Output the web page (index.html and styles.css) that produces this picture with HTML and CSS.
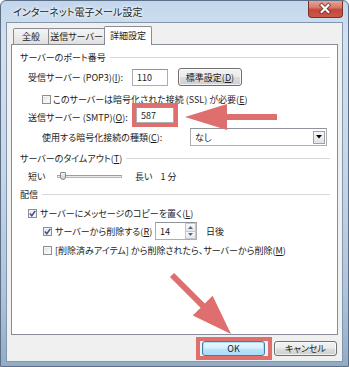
FILE: index.html
```html
<!DOCTYPE html>
<html lang="ja">
<head>
<meta charset="utf-8">
<link rel="stylesheet" href="styles.css">
</head>
<body>
<div class="window">
  <div class="titlebar">
    <span class="title">インターネット電子メール設定</span>
    <span class="close">
      <svg width="35" height="17" viewBox="0 0 35 17">
        <path d="M14 4 L21 11 M21 4 L14 11" stroke="#6b2a22" stroke-width="3.8" stroke-linecap="square"/>
        <path d="M14 4 L21 11 M21 4 L14 11" stroke="#ffffff" stroke-width="2.2" stroke-linecap="square"/>
      </svg>
    </span>
  </div>
  <div class="client">
    <div class="tabs">
      <div class="tab t1">全般</div>
      <div class="tab t2">送信サーバー</div>
      <div class="tab t3 active">詳細設定</div>
    </div>
    <div class="panel">
      <div class="group g1"><span>サーバーのポート番号</span><i class="rule"></i></div>

      <div class="row h18 r-pop">
        <span class="lbl w-port">受信サーバー (POP3)(<u>I</u>):</span>
        <span class="input in-port">110</span>
        <span class="btn btn-std">標準設定(<u>D</u>)</span>
      </div>

      <div class="row r-ssl">
        <span class="cb"></span>
        <span class="cbl">このサーバーは暗号化された接続 (SSL) が必要(<u>E</u>)</span>
      </div>

      <div class="row h18 r-smtp">
        <span class="lbl w-smtp">送信サーバー (SMTP)(<u>O</u>):</span>
        <span class="input in-smtp">587</span>
      </div>

      <div class="row h18 r-enc">
        <span class="lbl w-enc">使用する暗号化接続の種類(<u>C</u>):</span>
        <span class="select">なし<span class="dd"><svg width="6" height="4" viewBox="0 0 6 4"><path d="M0 0 H6 L3 3.5 Z" fill="#000"/></svg></span></span>
      </div>

      <div class="group g2"><span>サーバーのタイムアウト(<u>T</u>)</span><i class="rule"></i></div>

      <div class="row r-slider">
        <span class="short">短い</span>
        <span class="track"><span class="thumb"></span></span>
        <span class="long">長い</span>
        <span class="mins">1 分</span>
      </div>

      <div class="group g3"><span>配信</span><i class="rule"></i></div>

      <div class="row r-c1">
        <span class="cb on"><svg width="7" height="7" viewBox="0 0 7 7"><path d="M0.8 3.6 L2.8 5.8 L6.3 0.9" stroke="#3a4f95" stroke-width="1.5" fill="none"/></svg></span>
        <span class="cbl">サーバーにメッセージのコピーを置く(<u>L</u>)</span>
      </div>

      <div class="row h18 r-c2">
        <span class="cb on"><svg width="7" height="7" viewBox="0 0 7 7"><path d="M0.8 3.6 L2.8 5.8 L6.3 0.9" stroke="#3a4f95" stroke-width="1.5" fill="none"/></svg></span>
        <span class="cbl w-del">サーバーから削除する(<u>R</u>)</span>
        <span class="input in-days">14<span class="spin"><span class="su"><svg width="5" height="3" viewBox="0 0 5 3"><path d="M0 3 H5 L2.5 0 Z" fill="#4d6b8a"/></svg></span><span class="sd"><svg width="5" height="3" viewBox="0 0 5 3"><path d="M0 0 H5 L2.5 3 Z" fill="#4d6b8a"/></svg></span></span></span>
        <span class="days">日後</span>
      </div>

      <div class="row r-c3">
        <span class="cb"></span>
        <span class="cbl">[削除済みアイテム] から削除されたら、サーバーから削除(<u>M</u>)</span>
      </div>
    </div>
    <div class="footer">
      <span class="btn ok">OK</span>
      <span class="btn cancel">キャンセル</span>
    </div>
  </div>
  <svg class="arrows" width="349" height="367" viewBox="0 0 349 367">
    <polygon points="185,117 227,104 227,114 277,114 277,120 227,120 227,130" fill="#df6e6e"/>
    <polygon points="231,334 192.8,315.6 200.6,307.8 169.9,277.1 174.1,272.9 204.8,303.6 212.6,295.8" fill="#df6e6e"/>
  </svg>
</div>
</body>
</html>
```
FILE: styles.css
```css
* { box-sizing: border-box; margin: 0; padding: 0; }
html, body { width: 349px; height: 367px; overflow: hidden; background: #ffffff; }
body {
  font-family: "Noto Sans CJK JP", "Noto Sans", sans-serif;
  font-size: 9px;
  line-height: 1;
  color: #1b1b1b;
  font-feature-settings: "palt";
}
u { text-decoration: underline; text-underline-offset: 1px; }

.window {
  position: relative;
  width: 349px;
  height: 367px;
  border: 1px solid #5d6f86;
  border-radius: 6px 6px 0 0;
  background: linear-gradient(180deg, #c2d6ec 0%, #d3e1ef 10%, #c6d7e9 45%, #aec4db 80%, #93acc6 100%);
  padding: 0 5px 4px 5px;
  display: flex;
  flex-direction: column;
}

.titlebar {
  height: 21px;
  display: flex;
  align-items: center;
}
.title {
  padding-left: 7px;
  font-size: 10px;
  color: #1e1e1e;
  text-shadow: 0 0 5px #ffffff, 0 0 3px #ffffff;
}
.close {
  margin-left: auto;
  align-self: flex-start;
  width: 35px;
  height: 17px;
  border: 1px solid #7d3027;
  border-top: none;
  border-radius: 0 0 4px 4px;
  background: linear-gradient(180deg, #e8a596 0%, #d77a6a 40%, #c3473a 55%, #cc5848 100%);
  display: flex;
}
.close svg { display: block; margin-left: -1px; }

.client {
  flex: 1;
  background: #f0f0f0;
  border: 1px solid #8496ac;
  display: flex;
  flex-direction: column;
  padding: 3px 4px 0 4px;
}

.tabs {
  display: flex;
  align-items: flex-end;
  height: 18px;
  margin-left: 2px;
  position: relative;
  z-index: 1;
}
.tab {
  height: 16px;
  border: 1px solid #898c95;
  border-bottom: none;
  border-radius: 2px 2px 0 0;
  background: linear-gradient(180deg, #f5f5f5 0%, #ebebeb 50%, #dedede 100%);
  display: flex;
  align-items: center;
  justify-content: center;
  margin-right: -1px;
}
.t1 { width: 36px; }
.t2 { width: 57px; }
.t3 { width: 48px; }
.tab.active {
  height: 19px;
  margin-bottom: -1px;
  background: #ffffff;
  padding-bottom: 2px;
}

.panel {
  height: 291px;
  border: 1px solid #898c95;
  background: #ffffff;
  display: flex;
  flex-direction: column;
}

.group {
  display: flex;
  align-items: center;
  height: 14px;
  padding-left: 8px;
  padding-right: 7px;
}
.group .rule {
  flex: 1;
  height: 1px;
  background: #d6d9dc;
  margin-left: 4px;
}
.g1 { margin-top: 5px; }
.g2 { margin-top: 5px; }
.g3 { margin-top: 4px; }

.row {
  display: flex;
  align-items: center;
  height: 14px;
}
.h18 { height: 18px; }

.input {
  background: #ffffff;
  border: 1px solid #abadb3;
  border-top-color: #8f939b;
  display: flex;
  align-items: center;
  padding-left: 4px;
}

.btn {
  border: 1px solid #707070;
  border-radius: 3px;
  background: linear-gradient(180deg, #f2f2f2 0%, #ebebeb 48%, #dddddd 52%, #cfcfcf 100%);
  display: flex;
  align-items: center;
  justify-content: center;
  box-shadow: inset 0 0 0 1px rgba(255,255,255,0.7);
}

.r-pop { margin-top: 4px; padding-left: 16px; }
.w-port { width: 104px; }
.in-port { width: 36px; height: 17px; }
.btn-std { margin-left: 10px; width: 64px; height: 18px; }

.cb {
  width: 9px;
  height: 9px;
  border: 1px solid #8e8f8f;
  background: linear-gradient(135deg, #dcdcdc 0%, #f4f4f4 60%, #ffffff 100%);
  box-shadow: inset 0 0 0 1px #f4f4f4;
  display: flex;
  align-items: center;
  justify-content: center;
  flex: none;
}
.cb svg { display: block; }
.cbl { margin-left: 3px; }

.r-ssl { margin-top: 6px; padding-left: 30px; }
.r-ssl .cbl { margin-left: 2px; }

.r-smtp { margin-top: 1px; padding-left: 16px; }
.w-smtp { width: 108px; margin-top: 2px; }
.in-smtp {
  width: 38px;
  height: 16px;
  align-self: flex-start;
  outline: 4px solid #df6e6e;
  outline-offset: 0;
}

.r-enc { margin-top: 3px; padding-left: 30px; }
.w-enc { width: 148px; }
.select {
  width: 137px;
  height: 18px;
  border: 1px solid #abadb3;
  border-top-color: #8f939b;
  background: #ffffff;
  display: flex;
  align-items: center;
  padding-left: 4px;
}
.dd {
  margin-left: auto;
  margin-right: 1px;
  width: 12px;
  height: 13px;
  border: 1px solid #9ea3aa;
  background: linear-gradient(180deg, #f7f7f7 0%, #e2e2e2 100%);
  display: flex;
  align-items: center;
  justify-content: center;
}
.dd svg { display: block; }

.r-slider { margin-top: 4px; padding-left: 16px; }
.short { width: 29px; }
.track {
  position: relative;
  width: 65px;
  height: 3px;
  border: 1px solid #b7b7b7;
  border-top-color: #9c9c9c;
  background: #eaeaea;
}
.thumb {
  position: absolute;
  left: 2px;
  top: -4px;
  width: 6px;
  height: 8px;
  background: linear-gradient(180deg, #f2f2f2, #cfcfcf);
  border: 1px solid #8a8a8a;
  border-radius: 1px 1px 3px 3px;
}
.long { margin-left: 13px; }
.mins { margin-left: 8px; }

.r-c1 { margin-top: 5px; padding-left: 16px; }
.r-c2 { margin-top: 2px; padding-left: 31px; }
.w-del { width: 100px; }
.in-days {
  width: 42px;
  height: 18px;
  position: relative;
}
.spin {
  margin-left: auto;
  margin-right: 0;
  width: 11px;
  height: 16px;
  display: flex;
  flex-direction: column;
}
.su, .sd {
  flex: 1;
  border: 1px solid #c3c8cf;
  background: linear-gradient(180deg, #fafafa, #e6e6e6);
  display: flex;
  align-items: center;
  justify-content: center;
}
.sd { border-top: none; }
.su svg, .sd svg { display: block; }
.days { margin-left: 9px; }

.r-c3 { margin-top: 3px; padding-left: 31px; }

.footer {
  display: flex;
  justify-content: flex-end;
  gap: 9px;
  margin-top: 6px;
  margin-right: 1px;
}
.footer .btn { width: 63px; height: 15px; }
.btn.ok {
  position: relative;
  border-color: #3c7fb1;
  background: linear-gradient(180deg, #eaf6fd 0%, #d9f0fc 48%, #bee6fd 52%, #a7d9f5 100%);
  box-shadow: inset 0 0 0 1px #a8e0fb;
}
.btn.ok::after {
  content: "";
  position: absolute;
  left: -7px;
  right: -8px;
  top: -5px;
  bottom: -5px;
  border: 4px solid #df6e6e;
}

.arrows {
  position: absolute;
  left: -1px;
  top: -1px;
  pointer-events: none;
}
```
